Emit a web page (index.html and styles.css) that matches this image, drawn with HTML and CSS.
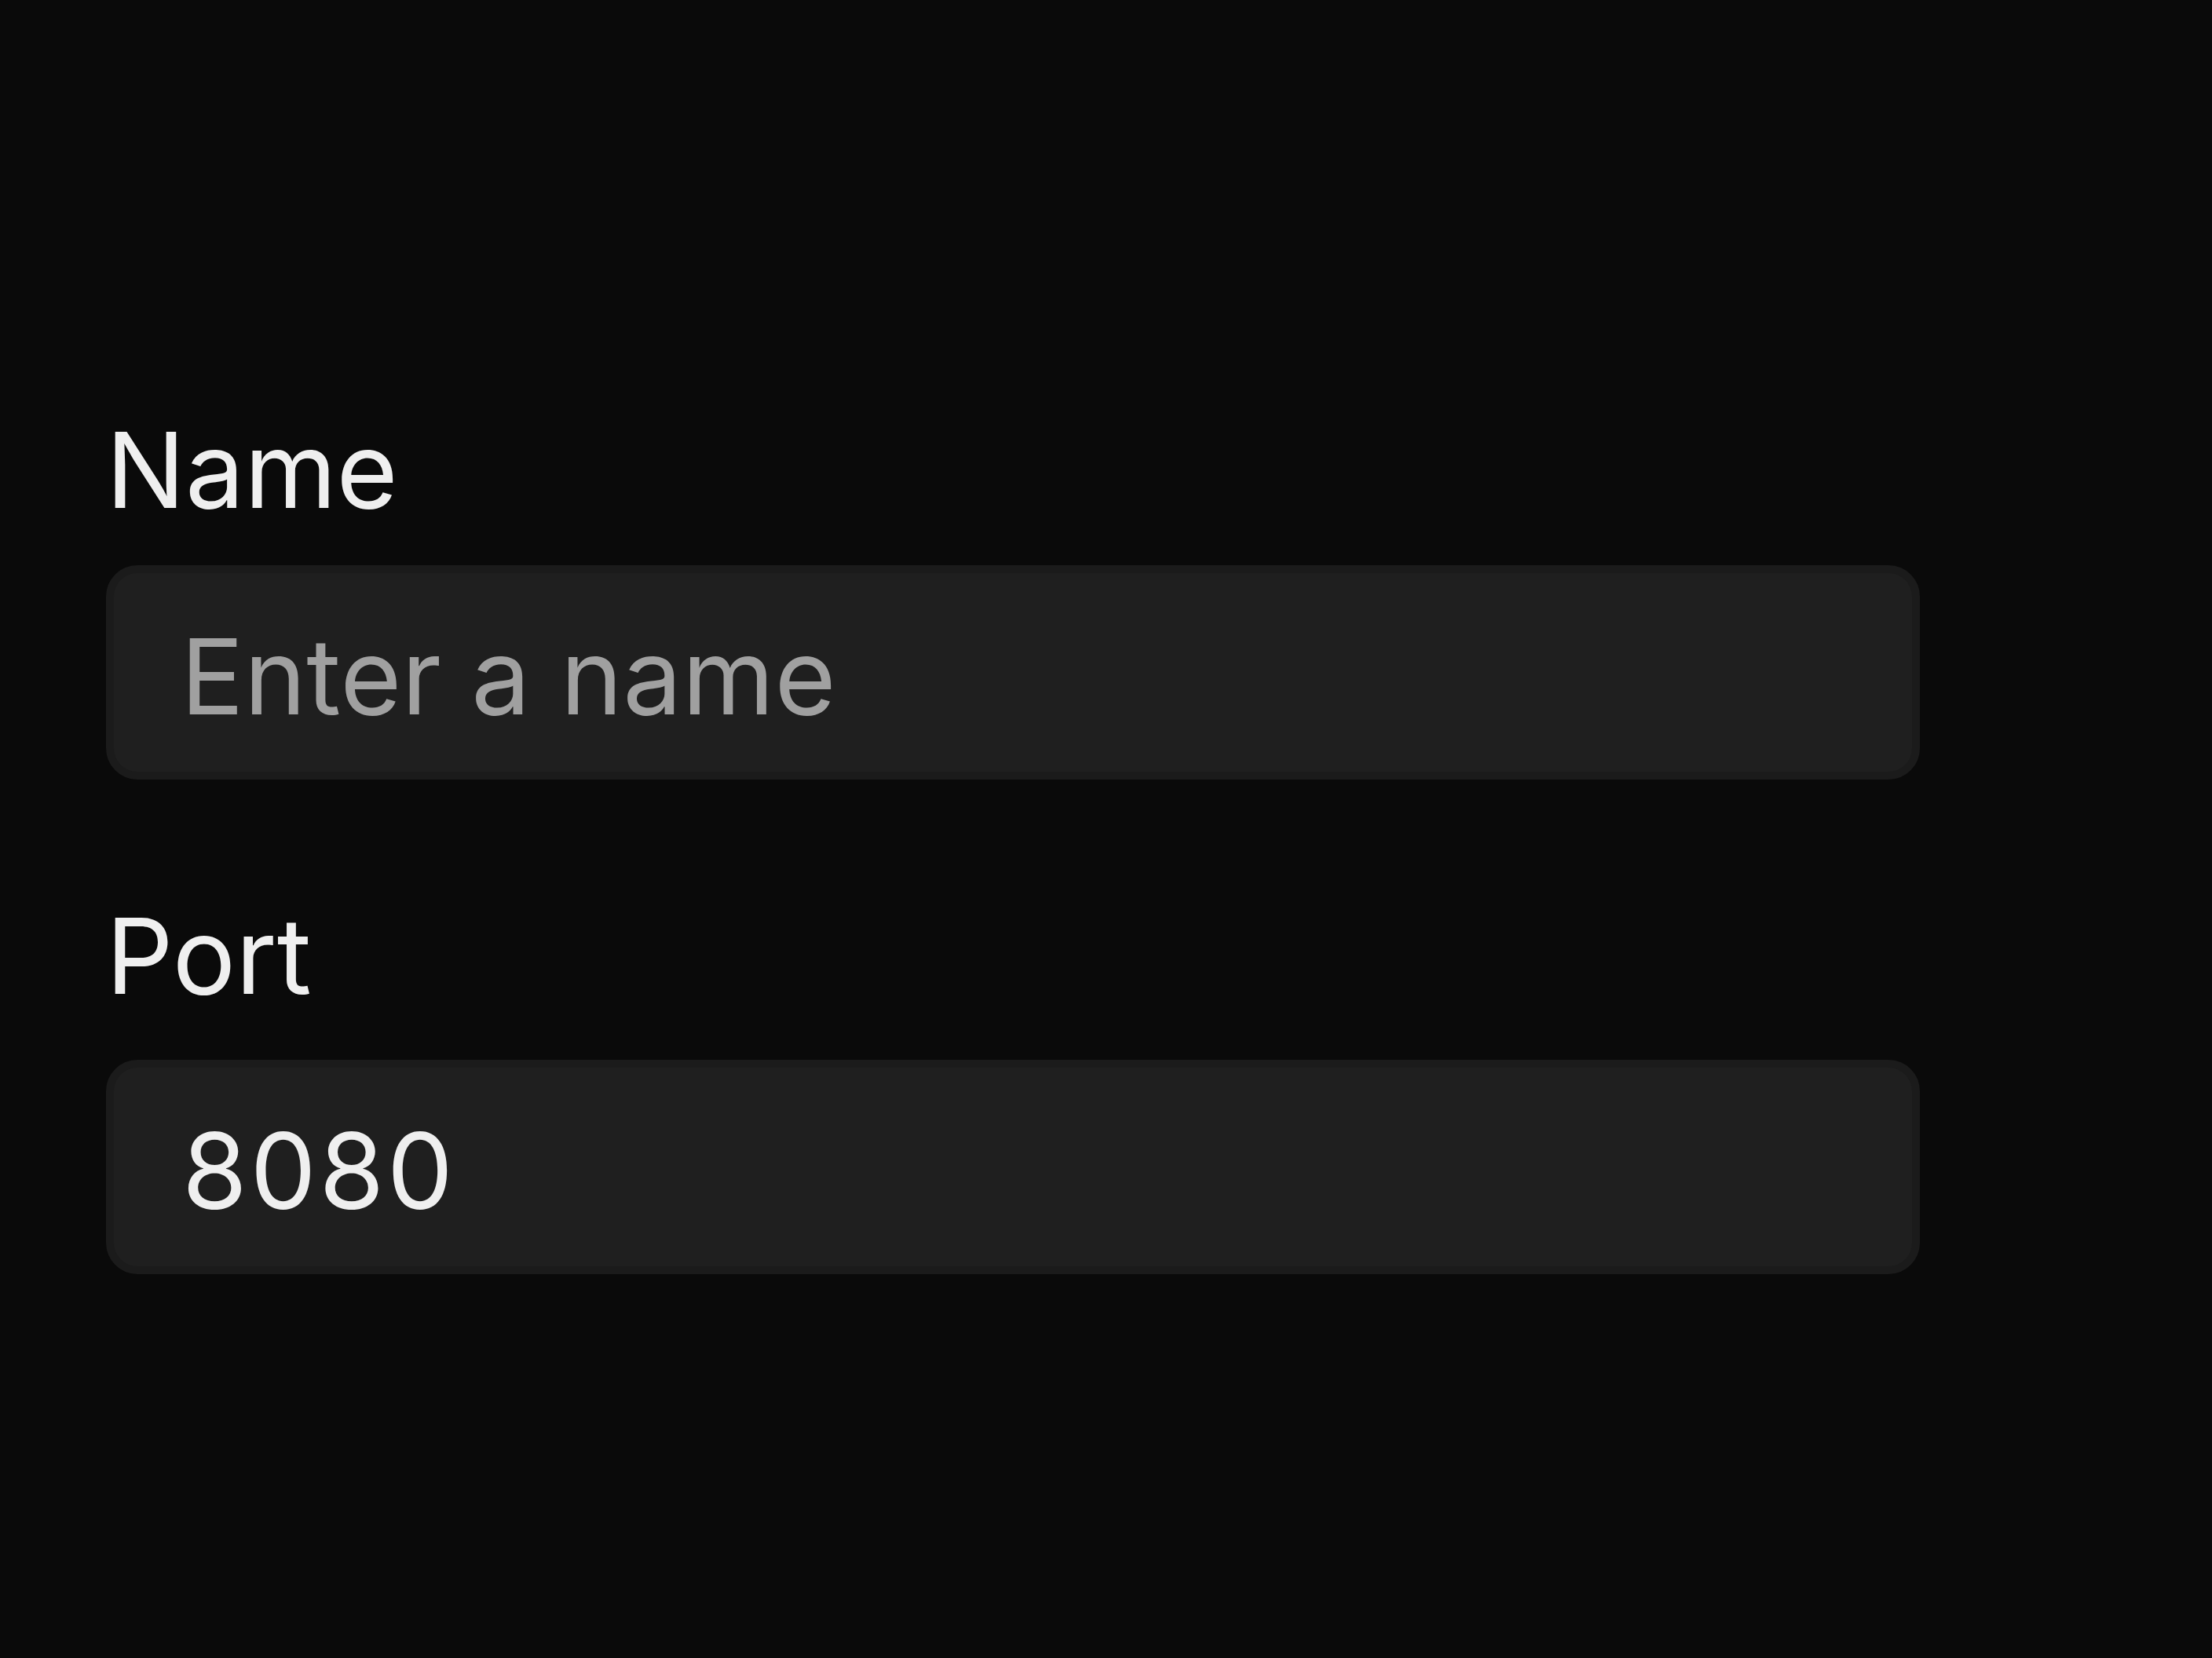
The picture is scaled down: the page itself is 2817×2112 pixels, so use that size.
FILE: index.html
```html
<!DOCTYPE html>
<html lang="en">
  <head>
    <meta charset="UTF-8" />
    <meta name="viewport" content="width=device-width, initial-scale=1.0" />
    <title>Server settings</title>
    <link rel="stylesheet" href="styles.css">
  </head>
  <body>
    <form class="settings-form">
      <div class="field">
        <label class="field-label" for="name">Name</label>
        <input class="field-input" id="name" type="text" placeholder="Enter a name" />
      </div>
      <div class="field field-port">
        <label class="field-label" for="port">Port</label>
        <input class="field-input field-number" id="port" type="text" value="8080" />
      </div>
    </form>
  </body>
</html>
```

FILE: styles.css
```css
html,
body {
  margin: 0;
  padding: 0;
  background-color: #0a0a0a;
}

body {
  font-family: Inter, "Noto Sans", sans-serif;
  color: #efefef;
}

.settings-form {
  display: flex;
  flex-direction: column;
  gap: 143px;
  padding: 517px 0 0 135px;
}

.field {
  display: flex;
  flex-direction: column;
  gap: 41px;
}

.field-port {
  gap: 52px;
}

.field-label {
  display: block;
  font-size: 134px;
  line-height: 162px;
  color: #efefef;
}

.field-input {
  box-sizing: border-box;
  width: 2310px;
  height: 273px;
  margin: 0;
  padding: 8px 85px 0;
  font-family: inherit;
  font-size: 134px;
  letter-spacing: 0.3px;
  color: #efefef;
  background-color: #1f1f1f;
  border: 10px solid #1b1b1b;
  border-radius: 40px;
  outline: none;
}

.field-input::placeholder {
  color: #a0a0a0;
  opacity: 1;
}

.field-number {
  font-variant-numeric: tabular-nums;
}
```
